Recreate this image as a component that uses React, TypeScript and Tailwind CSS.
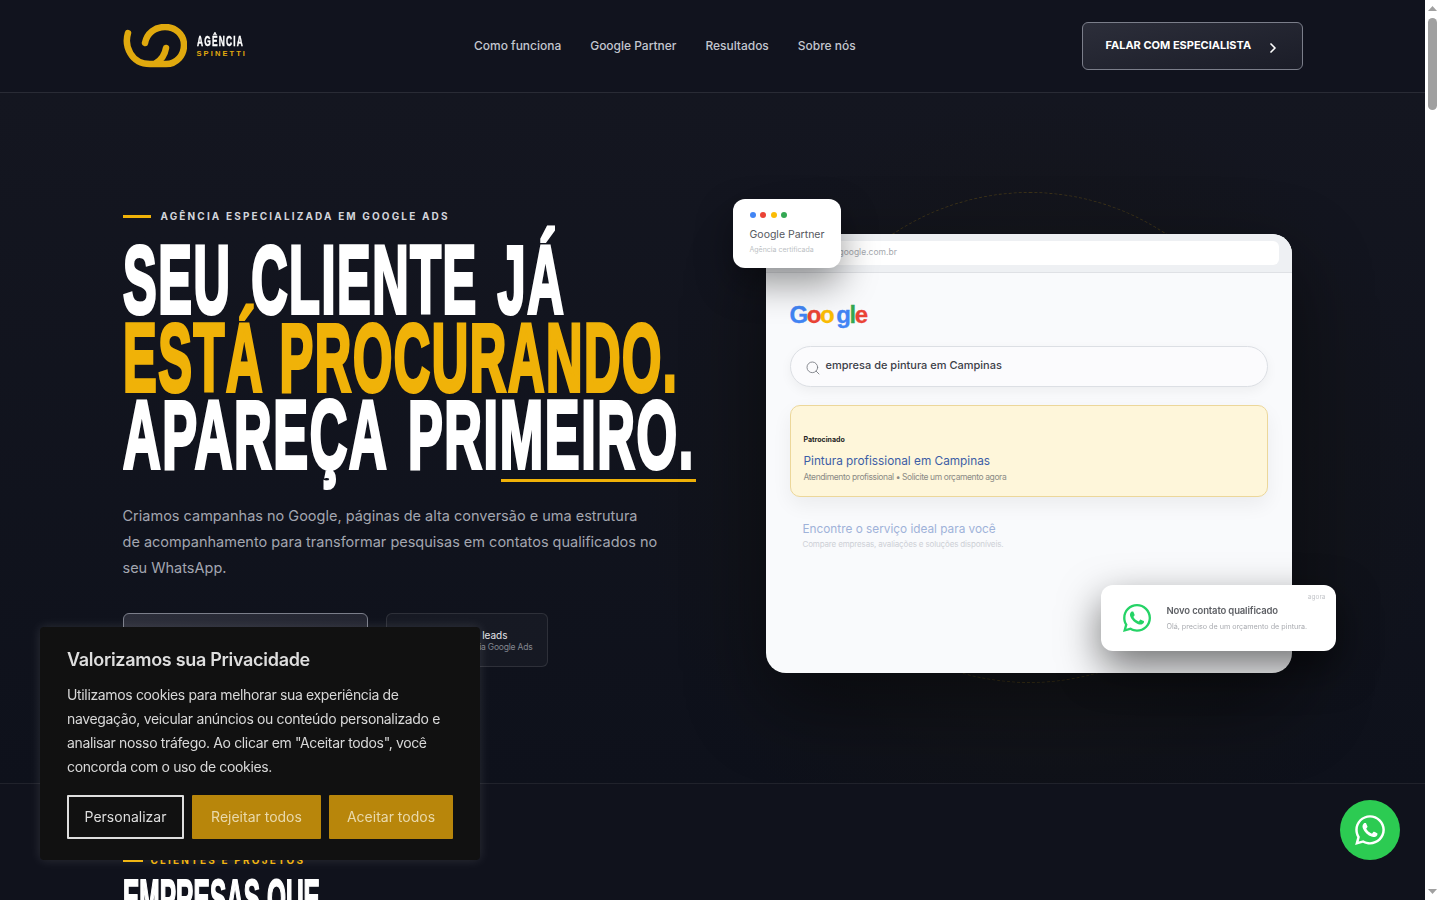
import { ChevronRight, Search } from "lucide-react";
import { FaWhatsapp } from "react-icons/fa";

const navLinks = ["Como funciona", "Google Partner", "Resultados", "Sobre nós"];
const dots = ["bg-[#4285f4]", "bg-[#ea4335]", "bg-[#fbbc05]", "bg-[#34a853]"];
const heavy = "font-['Liberation_Sans',sans-serif] font-bold";

function Logo() {
  return (
    <div className="flex items-center gap-[10px]">
      <svg viewBox="0 0 64 44" className="h-[44px] w-[64px]" fill="none" stroke="#e0a90e" strokeWidth="6.5" strokeLinecap="round">
        <path d="M5 9C1 22 8 40 27 40L43 40C54 40 61 31 61 21C61 10 52 3 42 3C32 3 24 9 22 19" />
        <path d="M43 24C42 30 38 36 33 39" />
      </svg>
      <div className="flex flex-col">
        <span className={`${heavy} origin-left scale-x-[.6] whitespace-nowrap text-[14px] leading-[15px] tracking-[2px] text-white [-webkit-text-stroke:0.4px_white]`}>AGÊNCIA</span>
        <span className={`${heavy} text-[7.5px] leading-[9px] tracking-[2.1px] text-[#e0a90e]`}>SPINETTI</span>
      </div>
    </div>
  );
}

function Header() {
  return (
    <header className="border-b border-white/10 bg-[#11131e]">
      <div className="mx-auto flex h-[92px] w-[1180px] items-center">
        <Logo />
        <nav className="ml-[199px] flex gap-[29px]">
          {navLinks.map((l) => (
            <a key={l} className="text-[12px] font-medium tracking-[-0.02px] text-[#c3c6cf]">{l}</a>
          ))}
        </nav>
        <button className="ml-auto flex h-[48px] w-[221px] items-center rounded-[6px] border border-[#7b7e8a] bg-gradient-to-br from-[#2c2e3a] to-[#1b1d28] pb-[2px] pl-[23px] text-[11px] font-bold text-white">
          FALAR COM ESPECIALISTA
          <ChevronRight className="ml-[14px] mt-[5px] h-[16px] w-[16px]" strokeWidth={2.5} />
        </button>
      </div>
    </header>
  );
}

function HeroCopy() {
  return (
    <div className="w-[600px] shrink-0 pt-[115px]">
      <div className="flex items-center gap-[10px]">
        <span className="h-[3px] w-[28px] bg-[#f0b208]" />
        <span className="text-[10px] font-bold leading-[16px] tracking-[2.15px] text-[#d2d4da]">AGÊNCIA ESPECIALIZADA EM GOOGLE ADS</span>
      </div>
      <h1 className={`${heavy} relative mt-[17px] whitespace-nowrap text-[96px] leading-[77.5px] tracking-[3px] text-white`}>
        <span className="block origin-left scale-x-[.525] [word-spacing:8px] [-webkit-text-stroke:4px_white]">SEU CLIENTE JÁ</span>
        <span className="block origin-left scale-x-[.526] text-[#f0b208] [-webkit-text-stroke:4px_#f0b208]">ESTÁ PROCURANDO.</span>
        <span className="block origin-left scale-x-[.543] [word-spacing:10px] [-webkit-text-stroke:4px_white]">APAREÇA PRIMEIRO.</span>
        <span className="absolute left-[378px] top-[238px] h-[3px] w-[195px] bg-[#f0b208]" />
      </h1>
      <p className="mt-[29px] w-[540px] text-[14.5px] leading-[26px] text-[#a3a6b0]">
        Criamos campanhas no Google, páginas de alta conversão e uma estrutura
        <br />
        de acompanhamento para transformar pesquisas em contatos qualificados no seu WhatsApp.
      </p>
      <div className="mt-[32px] flex gap-[18px]">
        <button className="h-[54px] w-[245px] rounded-[6px] border border-[#7b7e8a] bg-gradient-to-br from-[#2c2e3a] to-[#1b1d28] text-[11px] font-bold text-white">
          FALAR COM ESPECIALISTA
        </button>
        <div className="flex h-[54px] w-[162px] flex-col items-end justify-center rounded-[6px] border border-white/10 bg-white/[0.03] pr-[14px] pt-[2px]">
          <span className="mr-[25px] text-[10px] leading-[12px] text-[#e4e5e9]">leads</span>
          <span className="text-[8.5px] leading-[12px] tracking-[-0.2px] text-[#83868f]">via Google Ads</span>
        </div>
      </div>
    </div>
  );
}

function GoogleLogo() {
  return (
    <div className={`${heavy} flex text-[24px] leading-[30px] tracking-[-1.4px] [-webkit-text-stroke:0.3px_currentColor]`}>
      <span className="text-[#4285f4]">G</span>
      <span className="text-[#ea4335]">o</span>
      <span className="text-[#fbbc05]">o</span>
      <span className="ml-[3px] text-[#4285f4]">g</span>
      <span className="text-[#34a853]">l</span>
      <span className="text-[#ea4335]">e</span>
    </div>
  );
}

function BrowserMock() {
  return (
    <div className="relative ml-[43px] mt-[141px] h-[439px] w-[526px] rounded-[20px] bg-[#f9fafc] shadow-[0_30px_80px_rgba(0,0,0,0.45)]">
      {/* dashed orbit behind the mock */}
      <div className="pointer-events-none absolute -top-[42px] left-[18px] -z-10 h-[491px] w-[491px] rounded-full border border-dashed border-[#e0a90e]/20" />

      <div className="flex h-[39px] items-center rounded-t-[20px] border-b border-[#dfe1e5] bg-[#eef0f3] pl-[62px] pr-[13px]">
        <div className="flex h-[24px] flex-1 items-center rounded-[6px] bg-white pb-[2px] pl-[11px] text-[8.5px] text-[#a5a8ae]">google.com.br</div>
      </div>

      <div className="px-[24px] pt-[27px]">
        <GoogleLogo />
        <div className="mt-[16px] flex h-[41px] items-center rounded-full border border-[#dcdfe4] bg-[#fbfbfd] pl-[14px] shadow-[0_4px_12px_rgba(0,0,0,0.05)]">
          <Search className="mt-[3px] h-[16px] w-[16px] text-[#777b82]" strokeWidth={1.3} />
          <span className="ml-[5px] -translate-y-[1px] text-[11px] font-medium text-[#3c4048]">empresa de pintura em Campinas</span>
        </div>
        <div className="mt-[18px] h-[92px] rounded-[10px] border border-[#ecd79a] bg-[#fef6da] pl-[13px] pt-[29px] shadow-[0_8px_20px_rgba(0,0,0,0.06)]">
          <div className="text-[7px] font-bold leading-[10px] text-[#222]">Patrocinado</div>
          <div className="mt-[7px] text-[11.8px] leading-[18px] text-[#3d5ea6]">Pintura profissional em Campinas</div>
          <div className="mt-[1px] text-[8.5px] leading-[13px] tracking-[-0.4px] text-[#8b8b86]">Atendimento profissional • Solicite um orçamento agora</div>
        </div>
        <div className="mt-[23px] pl-[13px]">
          <div className="text-[11.8px] leading-[18px] text-[#9fb2d9]">Encontre o serviço ideal para você</div>
          <div className="text-[8px] leading-[13px] tracking-[-0.15px] text-[#cdd0d6]">Compare empresas, avaliações e soluções disponíveis.</div>
        </div>
      </div>

      <div className="absolute -left-[33px] -top-[35px] h-[69px] w-[108px] rounded-[12px] bg-white pl-[17px] pt-[13px] shadow-[0_16px_36px_rgba(0,0,0,0.4)]">
        <div className="flex gap-[4.5px]">
          {dots.map((d) => (
            <span key={d} className={`h-[6px] w-[6px] rounded-full ${d}`} />
          ))}
        </div>
        <div className="mt-[9px] whitespace-nowrap text-[10.5px] leading-[16px] text-[#55585e]">Google Partner</div>
        <div className="whitespace-nowrap text-[7px] leading-[14px] text-[#bcbfc4]">Agência certificada</div>
      </div>

      <div className="absolute -right-[44px] bottom-[22px] flex h-[66px] w-[235px] items-center rounded-[12px] bg-white pl-[20px] shadow-[0_16px_40px_rgba(0,0,0,0.55)] blur-[0.7px]">
        <FaWhatsapp className="h-[32px] w-[32px] text-[#25d366]" />
        <div className="ml-[14px]">
          <div className="text-[9.5px] font-semibold leading-[14px] tracking-[-0.15px] text-[#5f6166]">Novo contato qualificado</div>
          <div className="mt-[3px] text-[7.2px] leading-[12px] text-[#a9abb0]">Olá, preciso de um orçamento de pintura.</div>
        </div>
        <span className="absolute right-[10px] top-[8px] text-[6.5px] text-[#c4c6ca]">agora</span>
      </div>
    </div>
  );
}

function CookieBanner() {
  return (
    <div className="fixed bottom-[40px] left-[40px] z-20 h-[233px] w-[440px] rounded-[4px] bg-[#111111] px-[27px] pt-[20px] shadow-[0_0_12px_rgba(255,255,255,0.12)]">
      <div className="text-[18px] font-semibold leading-[26px] tracking-[-0.3px] text-[#dedede]">Valorizamos sua Privacidade</div>
      <p className="mt-[10px] text-[14px] leading-[24px] tracking-[-0.35px] text-[#d8d8d8]">
        Utilizamos cookies para melhorar sua experiência de navegação, veicular anúncios ou conteúdo personalizado e analisar nosso tráfego. Ao clicar em "Aceitar todos", você concorda com o uso de cookies.
      </p>
      <div className="mt-[16px] flex gap-[8px] text-[14px]">
        <button className="h-[44px] w-[117px] rounded-[1px] border-2 border-[#dedede] pb-[2px] text-[#dedede]">Personalizar</button>
        <button className="h-[44px] w-[129px] rounded-[1px] bg-[#b8860b] pb-[2px] text-[#e9d9ab]">Rejeitar todos</button>
        <button className="h-[44px] w-[124px] rounded-[1px] bg-[#b8860b] pb-[2px] text-[#e9d9ab]">Aceitar todos</button>
      </div>
    </div>
  );
}

// the window scrollbar as the reference shows it
function ScrollRail() {
  return (
    <div className="fixed inset-y-0 right-0 z-30 flex w-[15px] flex-col items-center bg-white">
      <svg viewBox="0 0 9 5" className="mt-[6px] h-[5px] w-[9px] fill-[#a0a0a0]">
        <polygon points="4.5,0 9,5 0,5" />
      </svg>
      <div className="mt-[7px] h-[92px] w-[9px] rounded-full bg-[#a0a0a0]" />
      <svg viewBox="0 0 9 5" className="mb-[6px] mt-auto h-[5px] w-[9px] fill-[#a0a0a0]">
        <polygon points="0,0 9,0 4.5,5" />
      </svg>
    </div>
  );
}

export default function App() {
  return (
    <div className="min-h-[1600px] w-[1425px] bg-[#10121c] font-[Inter,sans-serif]">
      <Header />

      <section className="relative z-0 h-[691px] overflow-hidden border-b border-white/5 bg-gradient-to-b from-[#141620] to-[#0e111b]">
        <div className="pointer-events-none absolute left-[640px] top-[0px] -z-10 h-[800px] w-[800px] rounded-full bg-[radial-gradient(circle,rgba(70,60,25,0.2)_0%,rgba(20,20,20,0.3)_50%,transparent_70%)]" />
        <div className="mx-auto flex w-[1180px]">
          <HeroCopy />
          <BrowserMock />
        </div>
      </section>

      <section className="mx-auto w-[1180px] pt-[68px]">
        <div className="flex items-center gap-[8px]">
          <span className="h-[3px] w-[20px] bg-[#f0b208]" />
          <span className="text-[10px] font-bold leading-[16px] tracking-[2.2px] text-[#f0b208]">CLIENTES E PROJETOS</span>
        </div>
        <h2 className={`${heavy} mt-[2px] origin-left scale-x-[.47] whitespace-nowrap text-[52px] leading-[56px] text-white [-webkit-text-stroke:2px_white]`}>EMPRESAS QUE</h2>
      </section>

      <CookieBanner />

      <a className="fixed bottom-[40px] right-[40px] z-20 flex h-[60px] w-[60px] items-center justify-center rounded-full bg-[#2ccb52]">
        <FaWhatsapp className="h-[34px] w-[34px] text-white" />
      </a>
      <ScrollRail />
    </div>
  );
}
